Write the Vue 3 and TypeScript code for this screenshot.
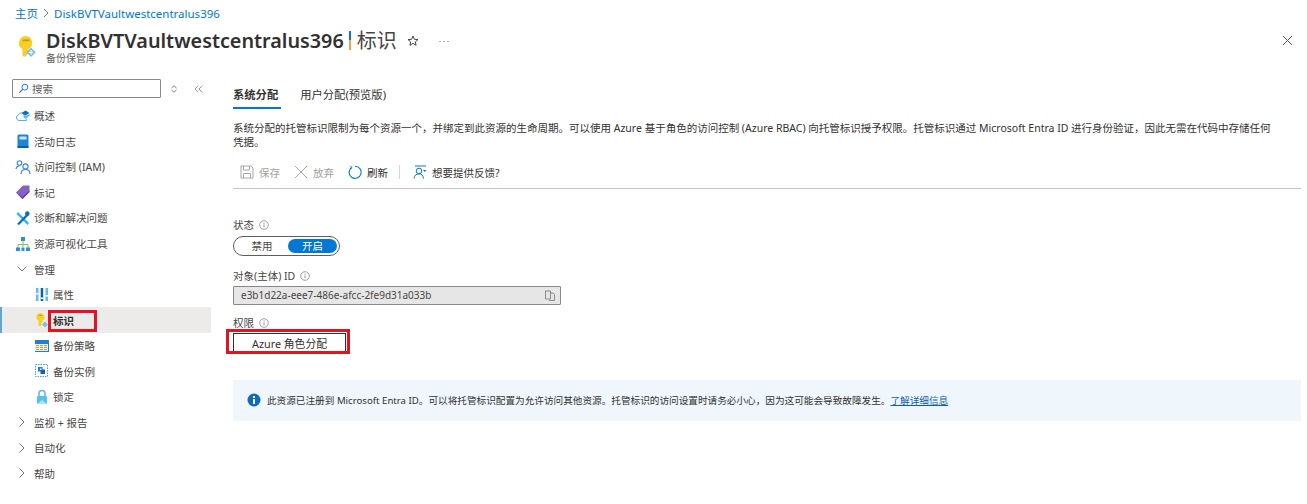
<script setup lang="ts">
const topItems = [
  { label: '概述', icon: 'cloud' },
  { label: '活动日志', icon: 'book' },
  { label: '访问控制 (IAM)', icon: 'iam' },
  { label: '标记', icon: 'tag' },
  { label: '诊断和解决问题', icon: 'tools' },
  { label: '资源可视化工具', icon: 'tree' },
]
const subItems = [
  { label: '属性', icon: 'bars', active: false },
  { label: '标识', icon: 'key', active: true },
  { label: '备份策略', icon: 'table', active: false },
  { label: '备份实例', icon: 'inst', active: false },
  { label: '锁定', icon: 'lock', active: false },
]
const collapsed = ['监视 + 报告', '自动化', '帮助']
</script>

<template>
  <div class="page">
    <header class="head">
      <nav class="crumb">
        <a>主页</a>
        <svg width="10" height="10" viewBox="0 0 10 10"><path d="M3 1 7 5 3 9" fill="none" stroke="#666" stroke-width=".9" /></svg>
        <a>DiskBVTVaultwestcentralus396</a>
      </nav>
      <div class="titlebar">
        <svg class="logo" width="20" height="24" viewBox="0 0 20 24">
          <path d="M9 1a7 7 0 0 1 3.500 12.500L11.500 14v1.800L9.800 17l1.400 1.400-1.800 2-2 1.600-2-1.500V14A7 7 0 0 1 9 1z" fill="#f7cf2b" />
          <rect x="5.500" y="4.500" width="7" height="1.800" rx=".9" fill="#c99a00" />
          <path d="M14 12.500l4.800 4.800-4.800 4.800-4.800-4.800z" fill="#7cc0ea" />
          <path d="M14 15v4.600M11.700 17.300h4.600" stroke="#fff" stroke-width="1" />
        </svg>
        <div class="titles">
          <h1><b>DiskBVTVaultwestcentralus396</b><i class="sep"></i><span>标识</span></h1>
          <div class="sub">备份保管库</div>
        </div>
        <svg class="star" width="12" height="12" viewBox="0 0 12 12"><path d="M6 1l1.400 3.300 3.600.3-2.700 2.300.8 3.500L6 8.300 2.900 10.400l.8-3.500L1 4.600l3.600-.3z" fill="none" stroke="#333" stroke-width=".9" /></svg>
        <svg class="more" width="10" height="3" viewBox="0 0 10 3"><circle cx="1" cy="1.500" r=".6" fill="#555" /><circle cx="5" cy="1.500" r=".6" fill="#555" /><circle cx="9" cy="1.500" r=".6" fill="#555" /></svg>
        <svg class="close" width="11" height="11" viewBox="0 0 11 11"><path d="M1 1l9 9M10 1l-9 9" stroke="#555" stroke-width="1" /></svg>
      </div>
    </header>

    <div class="body">
      <aside class="side">
        <div class="searchrow">
          <label class="search">
            <svg width="11" height="11" viewBox="0 0 12 12"><circle cx="7.500" cy="4.500" r="3.200" fill="none" stroke="#0078d4" /><path d="M5 7 1.500 10.500" stroke="#555" stroke-width="1.100" /></svg>
            <span>搜索</span>
          </label>
          <svg class="updown" width="8" height="8" viewBox="0 0 8 8"><path d="M1.500 3 4 .8 6.500 3M1.500 5 4 7.200 6.500 5" fill="none" stroke="#666" stroke-width=".8" /></svg>
          <svg class="dbl" width="9" height="8" viewBox="0 0 9 8"><path d="M4 .8 1 4l3 3.200M8 .8 5 4l3 3.200" fill="none" stroke="#777" stroke-width=".8" /></svg>
        </div>
        <ul class="menu">
          <li v-for="it in topItems" :key="it.label" class="row">
            <span class="ic">
              <svg width="16" height="16" viewBox="0 0 16 16">
                <template v-if="it.icon === 'cloud'">
                  <path d="M4 12.500a2.800 2.800 0 0 1-.5-5.500C4.200 5.300 5.700 4.600 7 5l3 2.500 1.500 5z" fill="#fff" stroke="#50b0e8" stroke-width="1" />
                  <path d="M6.500 5 10.500 2.500 14.500 5 10.500 7.500z" fill="#0f6cbd" />
                  <path d="M8.500 7 10.500 8.300 14.500 5.800V8L10.500 10.500 8.500 9.200z" fill="#5ab4ea" />
                </template>
                <template v-else-if="it.icon === 'book'">
                  <rect x="2.500" y="1.500" width="11" height="13.500" rx="1.500" fill="#1b87d9" />
                  <rect x="4.500" y="3.500" width="7" height="3" fill="#cfe7fa" />
                  <rect x="2.500" y="13" width="11" height="2" fill="#0f5fa8" />
                </template>
                <template v-else-if="it.icon === 'iam'">
                  <circle cx="4.500" cy="4" r="2.300" fill="none" stroke="#3a86d6" stroke-width="1.100" />
                  <circle cx="10.500" cy="7.500" r="2.600" fill="none" stroke="#3a86d6" stroke-width="1.100" />
                  <path d="M6 15c0-3 2-4.500 4.500-4.500S15 12 15 15M1 10c.3-2 1.500-3 3.500-3" fill="none" stroke="#3a86d6" stroke-width="1.100" />
                </template>
                <template v-else-if="it.icon === 'tag'">
                  <path d="M1 8.500 8 1.500h6.500V8L7.500 15z" fill="#8661c5" />
                  <path d="M1 8.500l6.500 6.500 7-7V6.500L7.500 13z" fill="#5e3ea1" />
                </template>
                <template v-else-if="it.icon === 'tools'">
                  <path d="M3 2 14 13l-1.500 2L1.500 4z" fill="#32b8e6" />
                  <path d="M2 14 12 3.500l2 1.500L4 15z" fill="#0f6cbd" />
                  <circle cx="12.300" cy="3.500" r="2.300" fill="#0f6cbd" />
                </template>
                <template v-else>
                  <path d="M8 5v6M3 12V8.500h10V12" fill="none" stroke="#86c440" stroke-width="1" />
                  <rect x="6" y="1" width="4" height="4" fill="#2e8de0" />
                  <rect x="1" y="11.500" width="4" height="3.500" fill="#2e8de0" />
                  <rect x="6.500" y="11.500" width="3" height="3.500" fill="#2e8de0" />
                  <rect x="11" y="11.500" width="4" height="3.500" fill="#2e8de0" />
                </template>
              </svg>
            </span>
            <span>{{ it.label }}</span>
          </li>
          <li class="row">
            <span class="ic chev">
              <svg width="12" height="12" viewBox="0 0 12 12"><path d="M1.500 3.500 6 8l4.500-4.500" fill="none" stroke="#666" stroke-width=".9" /></svg>
            </span>
            <span>管理</span>
          </li>
          <li v-for="it in subItems" :key="it.label" class="row subrow" :class="{ active: it.active }">
            <span class="ic">
              <svg width="14" height="16" viewBox="0 0 14 16">
                <template v-if="it.icon === 'bars'">
                  <rect x="1" y="1" width="2.500" height="13" fill="#5cc0ec" />
                  <rect x="5.700" y="1" width="2.500" height="13" fill="#155f9c" />
                  <rect x="10.500" y="1" width="2.500" height="13" fill="#5cc0ec" />
                  <rect x="1" y="6" width="2.500" height="1.500" fill="#fff" />
                  <rect x="5.700" y="10.500" width="2.500" height="1.500" fill="#fff" />
                  <rect x="10.500" y="8" width="2.500" height="1.500" fill="#fff" />
                </template>
                <template v-else-if="it.icon === 'key'">
                  <path d="M5.500 1a4 4 0 0 1 2 7.500v2L6 11.500l1 1-2 2-1.500-1V8.500A4 4 0 0 1 5.500 1z" fill="#f7cf2b" />
                  <rect x="4" y="3" width="3" height="1" fill="#c99a00" />
                  <path d="M10 9.500l3 3-3 3-3-3z" fill="#7cc0ea" />
                </template>
                <template v-else-if="it.icon === 'table'">
                  <g transform="translate(-2 0)">
                    <rect x="1" y="2" width="15" height="12" rx=".5" fill="#1f7fd1" />
                    <rect x="2" y="6" width="13" height="7" fill="#dfeefa" />
                    <path d="M3 7.500h3M7 7.500h3M11 7.500h3M3 9.500h3M7 9.500h3M11 9.500h3M3 11.500h3M7 11.500h3M11 11.500h3" stroke="#c8a82a" stroke-width="1" />
                  </g>
                </template>
                <template v-else-if="it.icon === 'inst'">
                  <rect x=".5" y="1.500" width="12" height="12" fill="none" stroke="#4fa3e0" stroke-dasharray="1.500 1" />
                  <rect x="3" y="4" width="4.500" height="4.500" fill="#1f7fd1" />
                  <rect x="5.500" y="6.500" width="4.500" height="4.500" fill="#1b5fa8" />
                  <rect x="5" y="5.500" width="1.500" height="1.500" fill="#fff" />
                </template>
                <template v-else>
                  <path d="M4 7V4.500a3 3 0 0 1 6 0V7" fill="none" stroke="#5bb8e8" stroke-width="1.500" />
                  <rect x="2" y="7" width="10" height="8" rx="1" fill="#50c4ec" />
                  <path d="M2 15l5-4 5 4z" fill="#a8e4f6" />
                </template>
              </svg>
            </span>
            <span class="lab">{{ it.label }}</span>
          </li>
          <li v-for="c in collapsed" :key="c" class="row">
            <span class="ic chev">
              <svg width="12" height="12" viewBox="0 0 12 12"><path d="M3.500 1.500 8 6l-4.500 4.500" fill="none" stroke="#666" stroke-width=".9" /></svg>
            </span>
            <span>{{ c }}</span>
          </li>
        </ul>
      </aside>

      <main class="main">
        <div class="tabs">
          <span class="tab on">系统分配</span>
          <span class="tab">用户分配(预览版)</span>
        </div>
        <p class="desc">系统分配的托管标识限制为每个资源一个，并绑定到此资源的生命周期。可以使用 Azure 基于角色的访问控制 (Azure RBAC) 向托管标识授予权限。托管标识通过 Microsoft Entra ID 进行身份验证，因此无需在代码中存储任何凭据。</p>
        <div class="toolbar">
          <span class="tool off">
            <svg width="14" height="14" viewBox="0 0 14 14"><path d="M1 1h10l2 2v10H1z" fill="none" stroke="#a6a6a6" /><path d="M3.500 1v4h6V1M3.500 13V8.500h7V13" fill="none" stroke="#a6a6a6" /></svg>
            保存
          </span>
          <span class="tool off">
            <svg width="14" height="14" viewBox="0 0 14 14"><path d="M1 1l12 12M13 1 1 13" stroke="#a6a6a6" /></svg>
            放弃
          </span>
          <span class="tool">
            <svg width="14" height="14" viewBox="0 0 14 14"><path d="M3.500 2.500a6 6 0 1 0 3.500-1.200" fill="none" stroke="#0078d4" stroke-width="1.100" /><path d="M2.500 .8l1.500 2-2 1" fill="none" stroke="#0078d4" stroke-width=".9" /></svg>
            刷新
          </span>
          <i class="vbar"></i>
          <span class="tool">
            <svg width="14" height="14" viewBox="0 0 14 14"><path d="M2 1h11" stroke="#0078d4" /><circle cx="6" cy="6" r="2.800" fill="none" stroke="#0078d4" /><path d="M1 13.500c.4-3 2.300-4.700 5-4.700s4 1.500 4.500 4.700" fill="none" stroke="#0078d4" /><path d="M10 5h3.500l-1.700 2z" fill="#0078d4" /></svg>
            想要提供反馈?
          </span>
        </div>

        <div class="lbl first">状态 <svg class="inf" width="10" height="10" viewBox="0 0 10 10"><circle cx="5" cy="5" r="4.300" fill="none" stroke="#777" stroke-width=".7" /><path d="M5 4.300v3M5 2.500v1" stroke="#777" stroke-width=".8" /></svg></div>
        <div class="toggle">
          <span class="opt">禁用</span>
          <span class="opt sel">开启</span>
        </div>
        <div class="lbl second">对象(主体) ID <svg class="inf" width="10" height="10" viewBox="0 0 10 10"><circle cx="5" cy="5" r="4.300" fill="none" stroke="#777" stroke-width=".7" /><path d="M5 4.300v3M5 2.500v1" stroke="#777" stroke-width=".8" /></svg></div>
        <div class="idbox">
          <span>e3b1d22a-eee7-486e-afcc-2fe9d31a033b</span>
          <svg width="10" height="11" viewBox="0 0 10 11"><path d="M.5 1h5v8h-5zM6 3h2l1.500 1.500V10.500H4" fill="none" stroke="#808080" stroke-width=".9" /></svg>
        </div>
        <div class="lbl third">权限 <svg class="inf" width="10" height="10" viewBox="0 0 10 10"><circle cx="5" cy="5" r="4.300" fill="none" stroke="#777" stroke-width=".7" /><path d="M5 4.300v3M5 2.500v1" stroke="#777" stroke-width=".8" /></svg></div>
        <div class="btnwrap">
          <button class="btn" type="button">Azure 角色分配</button>
          <i class="redbox"></i>
        </div>

        <div class="info">
          <svg width="14" height="14" viewBox="0 0 14 14"><circle cx="7" cy="7" r="6.500" fill="#0f6cbd" /><rect x="6" y="6" width="2" height="5" fill="#fff" /><rect x="6" y="3" width="2" height="2" fill="#fff" /></svg>
          <span>此资源已注册到 Microsoft Entra ID。可以将托管标识配置为允许访问其他资源。托管标识的访问设置时请务必小心，因为这可能会导致故障发生。<a>了解详细信息</a></span>
        </div>
      </main>
    </div>
  </div>
</template>

<style scoped>
.page {
  width: 1307px;
  height: 504px;
  overflow: hidden;
  background: #fff;
  color: #323130;
  font-family: "Noto Sans", "Noto Sans CJK SC", sans-serif;
  font-size: 10.5px;
  position: relative;
}
.head { height: 76px; padding: 0 0 0 15px; box-sizing: border-box; }
.crumb {
  height: 26px;
  display: flex;
  align-items: center;
  gap: 3px;
  color: #0078d4;
  font-size: 11.5px;
}
.crumb a { color: #0078d4; }
.titlebar { display: flex; align-items: flex-start; position: relative; }
.logo { margin: 9px 0 0 2px; }
.titles { margin-left: 9px; }
h1 {
  margin: 2px 0 0;
  height: 25px;
  display: flex;
  align-items: center;
  font-size: 20px;
  font-weight: 400;
  white-space: nowrap;
  line-height: 25px;
}
h1 b { font-weight: 600; font-size: 19.8px; }
.sep { width: 2px; height: 19px; margin: 0 6px 0 5px; background: linear-gradient(#0078d4 50%, #f7a23b 50%); }
h1 span { color: #484644; }
.sub { font-size: 10px; color: #605e5c; line-height: 11px; }
.star { margin: 9px 0 0 10px; }
.more { margin: 14px 0 0 20px; }
.close { position: absolute; right: 14px; top: 9px; }
.body { display: flex; height: 428px; }
.side { width: 211px; flex: none; }
.searchrow {
  height: 25px;
  display: flex;
  align-items: center;
  padding-left: 12px;
}
.search {
  width: 149px;
  height: 19px;
  box-sizing: border-box;
  border: 1px solid #8a8886;
  border-radius: 1px;
  display: flex;
  align-items: center;
  gap: 3px;
  padding-left: 5px;
  color: #605e5c;
}
.updown { margin-left: 9px; }
.dbl { margin-left: 16px; }
.menu { list-style: none; margin: 2px 0 0; padding: 0; }
.row {
  height: 25.55px;
  display: flex;
  align-items: center;
  color: #484644;
  white-space: nowrap;
}
.row .ic { width: 34px; padding-left: 15px; box-sizing: border-box; display: flex; align-items: center; flex: none; }
.row .chev { padding-left: 16px; }
.subrow .ic { width: 53px; padding-left: 35px; }
.row.active {
  background: #edebe9;
  box-shadow: inset 2px 0 0 #5ba7e0;
  position: relative;
  color: #323130;
  font-weight: 600;
}
.row.active .lab::after {
  content: "";
  position: absolute;
  left: 48px;
  top: 3px;
  width: 49px;
  height: 22px;
  box-sizing: border-box;
  border: 3px solid #e81123;
}
.main { flex: 1; padding-left: 22px; padding-right: 6px; min-width: 0; }
.tabs { display: flex; gap: 19px; height: 31px; margin-top: 6px; }
.tab { height: 26px; line-height: 26px; font-size: 11.3px; box-sizing: border-box; padding-right: 3px; position: relative; }
.tab.on { font-weight: 600; }
.tab.on::after { content: ""; position: absolute; left: 0; right: 0; bottom: -1px; height: 2px; background: #0078d4; }
.desc { margin: 8px 0 0; line-height: 14px; width: 1040px; height: 28px; color: #323130; }
.toolbar {
  height: 32px;
  margin-top: 7px;
  border-bottom: 1px solid #c8c6c4;
  display: flex;
  align-items: center;
  padding-left: 7px;
  gap: 14px;
}
.tool { display: flex; align-items: center; gap: 5px; }
.tool.off { color: #a19f9d; }
.vbar { width: 1px; height: 14px; background: #d6d4d2; margin: 0 -1px 0 -3px; }
.lbl { display: flex; align-items: center; gap: 5px; line-height: 14px; color: #484644; white-space: nowrap; }
.first { margin-top: 29px; }
.toggle {
  margin-top: 3.500px;
  width: 107px;
  height: 20px;
  box-sizing: border-box;
  border: 1px solid #605e5c;
  border-radius: 10px;
  display: flex;
  align-items: center;
  padding: 2px;
}
.opt { flex: 1; text-align: center; line-height: 14px; color: #484644; }
.opt.sel { flex: 0 0 49px; background: #0078d4; color: #fff; border-radius: 8px; margin-left: auto; }
.second { margin-top: 13px; }
.idbox {
  margin-top: 3px;
  width: 328px;
  height: 19px;
  box-sizing: border-box;
  border: 1px solid #8a8886;
  border-radius: 1px;
  background: #e6e6e6;
  display: flex;
  align-items: center;
  justify-content: space-between;
  padding: 0 5px 0 7px;
  font-family: "Noto Sans", sans-serif;
  font-size: 10px;
  color: #484644;
}
.third { margin-top: 11px; }
.btnwrap { position: relative; width: 113px; height: 20px; margin-top: 3px; }
.btn {
  display: block;
  width: 113px;
  height: 20px;
  padding: 0;
  background: #fff;
  border: 1px solid #323130;
  border-radius: 0;
  color: #323130;
  font: inherit;
  font-size: 10.8px;
}
.redbox {
  position: absolute;
  left: -7px;
  top: -4px;
  width: 124px;
  height: 25px;
  box-sizing: border-box;
  border: 3px solid #e81123;
}
.info {
  margin-top: 27px;
  height: 41px;
  background: #eff6fc;
  display: flex;
  align-items: center;
  gap: 6px;
  padding-left: 14px;
  font-size: 9.65px;
  white-space: nowrap;
  color: #323130;
}
.info a { color: #0f5fa8; text-decoration: underline; }
</style>
